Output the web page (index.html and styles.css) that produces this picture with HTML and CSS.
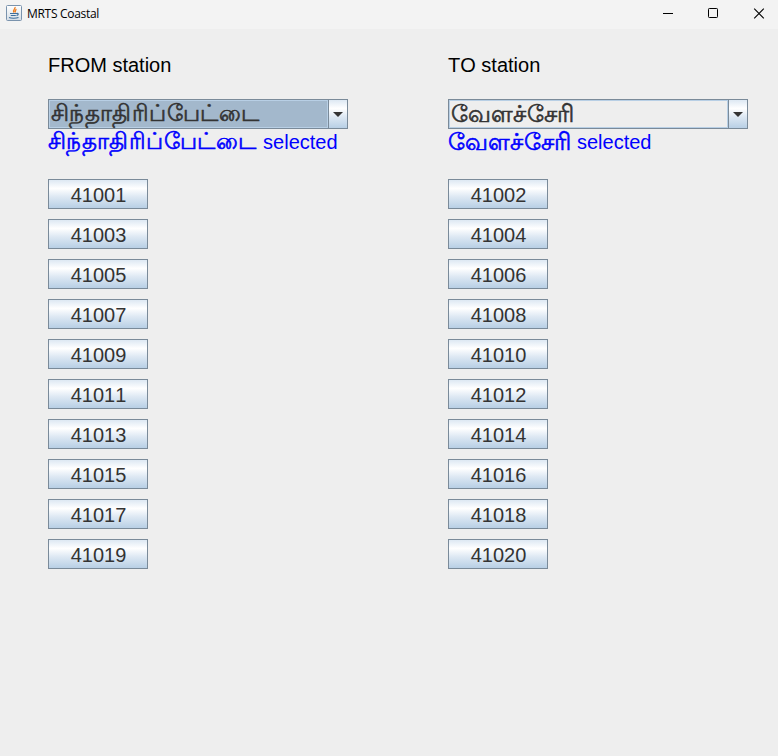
FILE: index.html
```html
<!DOCTYPE html>
<html lang="en">
<head>
<meta charset="utf-8">
<title>MRTS Coastal</title>
<link rel="stylesheet" href="styles.css">
</head>
<body>
<header class="titlebar">
  <svg class="logo" width="16" height="16" viewBox="0 0 16 16"><defs><linearGradient id="tile" x2="0" y2="1"><stop stop-color="#fff"/><stop offset="1" stop-color="#d5dde5"/></linearGradient></defs><rect x=".5" y=".5" width="15" height="15" rx="1" fill="url(#tile)" stroke="#7a93ad"/><path d="M9 2c1 2-3 2.700-1 5.500M10.500 4.300c-2 1-1.600 1.600-1 3.200" fill="none" stroke="#ee7d1f" stroke-width="1.300"/><path d="M4 8.500h6.500M4.800 10.500h5M10.500 8.500c2.500-.7 2 1.700 0 2M3 12.500c2 1 7 1 9.500 0" fill="none" stroke="#3f6f9c" stroke-width="1.200"/></svg>
  <span class="title">MRTS Coastal</span>
  <svg class="controls" width="138" height="28" viewBox="0 0 138 28" fill="none" stroke="#000"><path d="M23 13.500h10"/><rect x="68.500" y="8.500" width="9" height="9" rx=".8"/><path d="M114.200 8.700l9.600 9.600M123.800 8.700l-9.600 9.600" stroke-width="1.100"/></svg>
</header>
<main class="content">
  <section class="column from">
    <div class="label">FROM station</div>
    <div class="combo focused"><span class="value tamil">சிந்தாதிரிப்பேட்டை</span><span class="arrow"></span></div>
    <div class="status"><span class="tamil">சிந்தாதிரிப்பேட்டை</span><span class="word">selected</span></div>
    <div class="trains"><button>41001</button><button>41003</button><button>41005</button><button>41007</button><button>41009</button><button>41011</button><button>41013</button><button>41015</button><button>41017</button><button>41019</button></div>
  </section>
  <section class="column to">
    <div class="label">TO station</div>
    <div class="combo"><span class="value tamil">வேளச்சேரி</span><span class="arrow"></span></div>
    <div class="status"><span class="tamil">வேளச்சேரி</span><span class="word">selected</span></div>
    <div class="trains"><button>41002</button><button>41004</button><button>41006</button><button>41008</button><button>41010</button><button>41012</button><button>41014</button><button>41016</button><button>41018</button><button>41020</button></div>
  </section>
</main>
</body>
</html>
```
FILE: styles.css
```css
* { box-sizing: border-box; }
body { margin: 0; height: 756px; background: #eee; font: 20px "Liberation Sans", sans-serif; font-kerning: none; overflow: hidden; }
.titlebar { height: 29px; background: #f3f3f3; display: flex; align-items: flex-start; padding-left: 6px; }
.logo { margin-top: 5px; }
.title { font: 12px/16px "Open Sans", sans-serif; margin: 6px 0 0 5px; color: #000; letter-spacing: -.3px; }
.controls { margin-left: auto; }
.content { display: grid; grid-template-columns: 300px 300px; column-gap: 100px; padding: 20px 0 0 48px; }
.label { height: 30px; line-height: 32px; margin-bottom: 20px; }
.combo { height: 30px; border: 1px solid #7a8a99; display: flex; color: #333; }
.value { flex: 1; padding-left: 1px; border: 1px solid #b8cfe5; white-space: nowrap; }
.focused .value { background: #a3b8cc; }
.arrow { width: 19px; border-left: 1px solid #7a8a99; background: linear-gradient(#dde8f3 0%, #fff 30%, #dde8f3 60%, #b8cfe5 100%); display: grid; place-items: center; }
.arrow::after { content: ""; border: 5px solid transparent; border-top-color: #333; border-bottom: 0; }
.tamil { font-family: "Noto Sans", "Liberation Sans", sans-serif; line-height: 23px; -webkit-text-stroke: .6px currentColor; }
.from .tamil { font-size: 23px; letter-spacing: .45px; }
.to .tamil { font-size: 24px; letter-spacing: .2px; }
.status { height: 30px; display: flex; color: #00f; white-space: nowrap; }
.status .tamil { line-height: 23px; }
.word { line-height: 26px; margin-left: 7px; }
.to .word { margin-left: 6px; }
.trains { display: grid; gap: 10px; justify-items: start; margin-top: 20px; }
button { width: 100px; height: 30px; padding: 2px 0 0 1px; border: 1px solid #7a8a99; background: linear-gradient(#dde8f3 0%, #fff 30%, #dde8f3 60%, #b8cfe5 100%); color: #333; font: 20px "Liberation Sans", sans-serif; font-kerning: none; }
```
